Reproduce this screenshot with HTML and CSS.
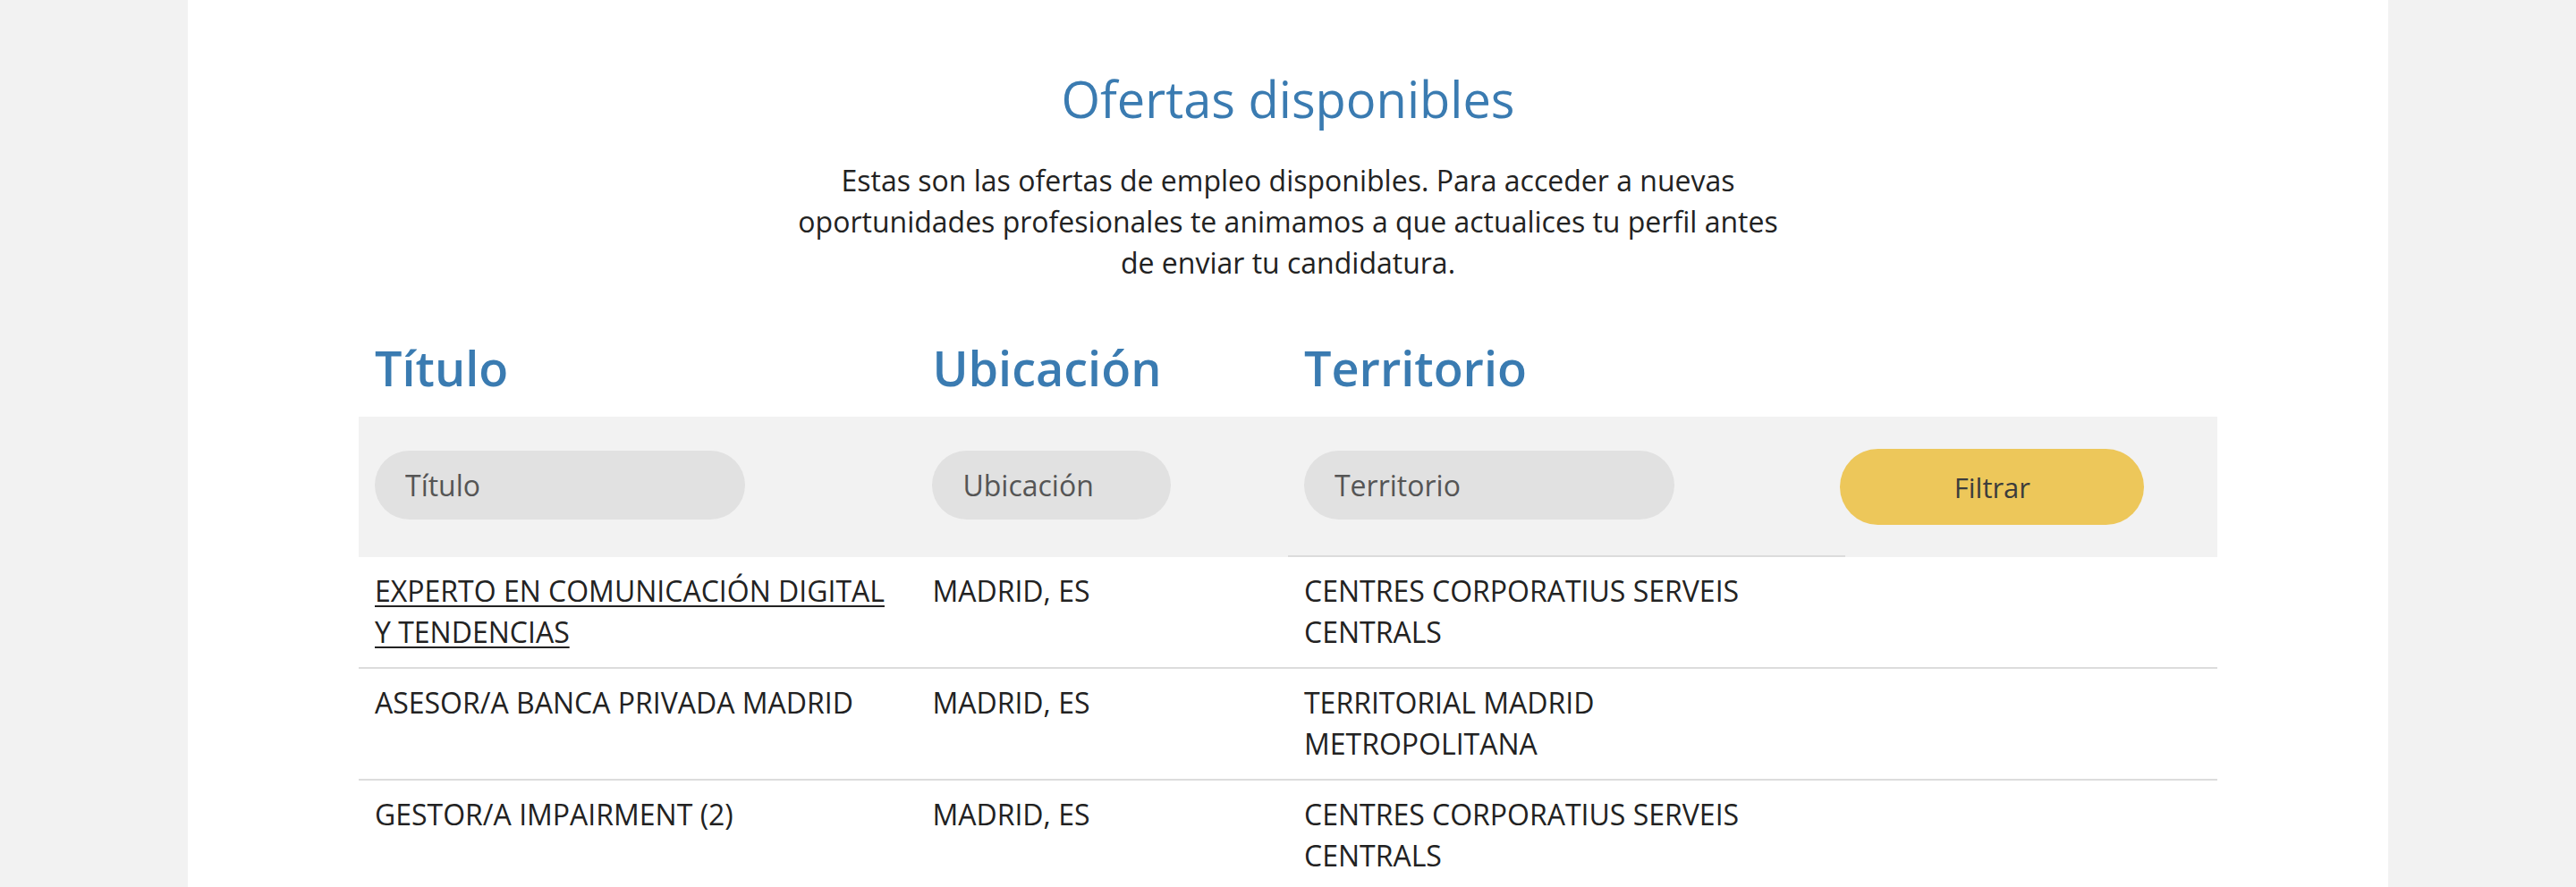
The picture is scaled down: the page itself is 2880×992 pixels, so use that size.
FILE: index.html
```html
<!DOCTYPE html>
<html lang="es">
<head>
<meta charset="utf-8">
<title>Ofertas disponibles</title>
<link rel="stylesheet" href="styles.css">
</head>
<body>
<main class="page">
  <h1 class="title">Ofertas disponibles</h1>
  <p class="intro">Estas son las ofertas de empleo disponibles. Para acceder a nuevas oportunidades profesionales te animamos a que actualices tu perfil antes de enviar tu candidatura.</p>
  <section class="offers">
    <div class="head-row">
      <div class="head-cell">Título</div>
      <div class="head-cell">Ubicación</div>
      <div class="head-cell">Territorio</div>
      <div class="head-cell"></div>
    </div>
    <form class="filter-row">
      <div class="filter-cell"><input class="field field-wide" type="text" placeholder="Título"></div>
      <div class="filter-cell"><input class="field field-narrow" type="text" placeholder="Ubicación"></div>
      <div class="filter-cell filter-cell-line"><input class="field field-wide" type="text" placeholder="Territorio"></div>
      <div class="filter-cell filter-cell-btn"><button class="btn" type="button">Filtrar</button></div>
    </form>
    <div class="row">
      <div class="cell"><a class="job-link" href="#">EXPERTO EN COMUNICACIÓN DIGITAL Y TENDENCIAS</a></div>
      <div class="cell">MADRID, ES</div>
      <div class="cell">CENTRES CORPORATIUS SERVEIS CENTRALS</div>
      <div class="cell"></div>
    </div>
    <div class="row">
      <div class="cell">ASESOR/A BANCA PRIVADA MADRID</div>
      <div class="cell">MADRID, ES</div>
      <div class="cell">TERRITORIAL MADRID METROPOLITANA</div>
      <div class="cell"></div>
    </div>
    <div class="row">
      <div class="cell">GESTOR/A IMPAIRMENT (2)</div>
      <div class="cell">MADRID, ES</div>
      <div class="cell">CENTRES CORPORATIUS SERVEIS CENTRALS</div>
      <div class="cell"></div>
    </div>
  </section>
</main>
</body>
</html>
```

FILE: styles.css
```css
* { box-sizing: border-box; }

html, body {
  margin: 0;
  padding: 0;
}

body {
  background: #f2f2f2;
  font-family: "Open Sans", "Noto Sans", "Liberation Sans", sans-serif;
  color: #222;
}

.page {
  width: 2460px;
  min-height: 992px;
  margin: 0 auto;
  background: #fff;
  padding-top: 72px;
  overflow: hidden;
}

.title {
  margin: 0;
  text-align: center;
  font-size: 56px;
  font-weight: 400;
  line-height: normal;
  color: #3a7bb1;
}

.intro {
  width: 1120px;
  margin: 31px auto 0;
  text-align: center;
  font-size: 32px;
  line-height: 46px;
  color: #222;
}

.offers {
  width: 2078px;
  margin: 57px auto 0;
}

.head-row,
.filter-row,
.row {
  display: grid;
  grid-template-columns: 30% 20% 30% 20%;
}

.head-cell {
  padding: 0 18px;
  font-size: 54px;
  font-weight: 600;
  line-height: normal;
  color: #3a7bb1;
}

.filter-row {
  margin: 18px 0 0;
  background: #f2f2f2;
  height: 157px;
}

.filter-cell {
  padding: 38px 18px 0;
}

.filter-cell-line {
  border-bottom: 2px solid #dcdcdc;
}

.filter-cell-btn {
  padding: 36px 0 0;
}

.field {
  display: block;
  height: 77px;
  border: 0;
  border-radius: 40px;
  background: #e1e1e1;
  padding: 0 34px;
  font-family: inherit;
  font-size: 32px;
  color: #333;
  outline: none;
}

.field::placeholder {
  color: #555;
  opacity: 1;
}

.field-wide { width: 414px; }
.field-narrow { width: 267px; }

.btn {
  display: block;
  width: 340px;
  height: 85px;
  margin-left: -6px;
  border: 0;
  border-radius: 43px;
  background: #edc75a;
  font-family: inherit;
  font-size: 31px;
  color: #3c3c3c;
  cursor: pointer;
}

.row {
  border-bottom: 2px solid #dcdcdc;
}

.cell {
  padding: 15px 18px 16px;
  font-size: 32px;
  line-height: 46px;
  color: #222;
}

.job-link {
  color: #222;
  text-decoration: underline;
  text-underline-offset: 4px;
  text-decoration-thickness: 2px;
}
```
